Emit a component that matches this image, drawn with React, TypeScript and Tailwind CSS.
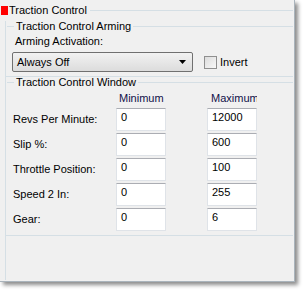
import { ReactNode } from 'react';

const rows = [
  { label: 'Revs Per Minute:', min: '0', max: '12000' },
  { label: 'Slip %:', min: '0', max: '600' },
  { label: 'Throttle Position:', min: '0', max: '100' },
  { label: 'Speed 2 In:', min: '0', max: '255' },
  { label: 'Gear:', min: '0', max: '6' },
];

function GroupTitle({ children }: { children: ReactNode }) {
  return (
    <div className="flex items-center h-[10px] pl-px">
      <div className="w-[7px] h-px bg-[#d5dfe5]" />
      <span className="px-[2px] leading-[10px] whitespace-nowrap">{children}</span>
      <div className="flex-1 h-px bg-[#d5dfe5]" />
    </div>
  );
}

function Field({ value }: { value: string }) {
  return (
    <div className="w-[50px] h-[23px] bg-white border border-[#dfe3e8] border-t-[#abadb3] pl-[4px] pt-[2px] leading-[13px]">
      {value}
    </div>
  );
}

export default function App() {
  return (
    <div className="w-[305px] h-[291px] bg-white text-[11px] text-black font-['Liberation_Sans',Arial,sans-serif]">
      <div className="w-[295px] h-[282px] bg-[#f0f0f0] border-r border-b border-[#aab4bc] shadow-[3px_3px_4px_rgba(0,0,0,0.45)] flex flex-col">
        {/* outer title */}
        <div className="flex items-center h-[21px] pl-[1px] pr-[1px]">
          <div className="w-[7px] h-[9px] bg-[#ff0000]" />
          <span className="pl-[1px] pr-[3px] whitespace-nowrap">Traction Control</span>
          <div className="flex-1 h-px bg-[#d5dfe5]" />
        </div>

        <div className="flex-1 ml-[5px] mr-[1px] mb-[1px] border-l border-[#d5dfe5] flex flex-col">
          {/* arming */}
          <GroupTitle>Traction Control Arming</GroupTitle>
          <div className="mt-[3px] pl-[9px] h-[15px] leading-[15px]">Arming Activation:</div>
          <div className="mt-[3px] flex items-center pl-[6px]">
            <div className="w-[181px] h-[20px] border border-[#707070] rounded-[2px] bg-gradient-to-b from-[#f2f2f2] to-[#dcdcdc] flex items-center pl-[4px] pr-[6px]">
              <span className="flex-1">Always Off</span>
              <svg width="7" height="4" viewBox="0 0 7 4">
                <path d="M0 0h7L3.5 4z" fill="#000" />
              </svg>
            </div>
            <div className="ml-[11px] w-[13px] h-[13px] border border-[#8f8f8f] bg-gradient-to-br from-[#dcdcdc] to-[#f8f8f8]" />
            <span className="ml-[3px]">Invert</span>
          </div>
          <div className="mt-[4px] h-px bg-[#d5dfe5]" />

          {/* window */}
          <GroupTitle>Traction Control Window</GroupTitle>
          <div className="mt-[4px] h-[15px] flex leading-[15px]">
            <div className="w-[110px]" />
            <div className="w-[50px] overflow-hidden whitespace-nowrap pl-[3px] text-[#10104a]">Minimum</div>
            <div className="w-[41px]" />
            <div className="w-[50px] overflow-hidden whitespace-nowrap pl-[4px] text-[#10104a]">Maximum</div>
          </div>
          <div className="mt-[2px] flex flex-col gap-[2px]">
            {rows.map((r) => (
              <div key={r.label} className="flex items-start h-[23px]">
                <div className="w-[110px] pl-[7px] pt-[5px] leading-[13px]">{r.label}</div>
                <Field value={r.min} />
                <div className="w-[41px]" />
                <Field value={r.max} />
              </div>
            ))}
          </div>
          <div className="mt-[4px] h-px bg-[#d5dfe5]" />
        </div>
      </div>
    </div>
  );
}
